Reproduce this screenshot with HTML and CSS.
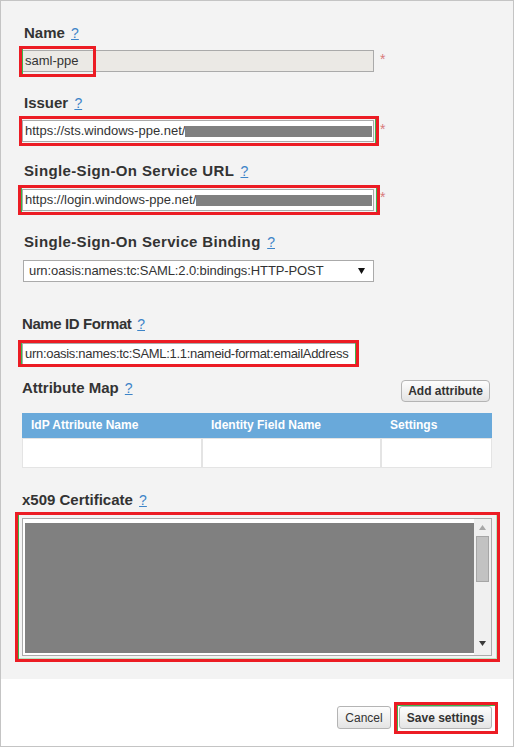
FILE: index.html
```html
<!DOCTYPE html>
<html lang="en">
<head>
<meta charset="utf-8">
<title>SAML settings</title>
<link rel="stylesheet" href="styles.css">
</head>
<body>
<div class="panel">
  <div class="form">
    <div class="field f-name">
      <div class="lbl">Name <a class="help" href="#">?</a></div>
      <div class="row">
        <div class="inp-wrap">
          <div class="inp inp-disabled"><span class="val">saml-ppe</span></div>
          <span class="hl hl-name"></span>
        </div>
        <span class="req">*</span>
      </div>
    </div>

    <div class="field f-issuer">
      <div class="lbl">Issuer <a class="help" href="#">?</a></div>
      <div class="row">
        <div class="inp-wrap">
          <div class="inp"><span class="val">https://sts.windows-ppe.net/</span><span class="redact"></span></div>
          <span class="hl hl-issuer"></span>
        </div>
        <span class="req">*</span>
      </div>
    </div>

    <div class="field f-sso">
      <div class="lbl lbl-wide lbl-10">Single-Sign-On Service URL <a class="help" href="#">?</a></div>
      <div class="row">
        <div class="inp-wrap">
          <div class="inp"><span class="val">https://login.windows-ppe.net/</span><span class="redact"></span></div>
          <span class="hl hl-sso"></span>
        </div>
        <span class="req req-low">*</span>
      </div>
    </div>

    <div class="field f-binding">
      <div class="lbl lbl-wide lbl-10">Single-Sign-On Service Binding <a class="help" href="#">?</a></div>
      <div class="select">
        <span class="val">urn:oasis:names:tc:SAML:2.0:bindings:HTTP-POST</span>
        <svg class="caret" width="7" height="6" viewBox="0 0 7 6"><polygon points="0,0 7,0 3.5,6" fill="#111"/></svg>
      </div>
    </div>

    <div class="field f-nameid">
      <div class="lbl lbl-low lbl-narrow lbl-11">Name ID Format <a class="help" href="#">?</a></div>
      <div class="inp-wrap">
        <div class="inp inp-nameid"><span class="val">urn:oasis:names:tc:SAML:1.1:nameid-format:emailAddress</span></div>
        <span class="hl hl-nameid"></span>
      </div>
    </div>

    <div class="field f-attr">
      <div class="attr-head">
        <div class="lbl lbl-low">Attribute Map <a class="help" href="#">?</a></div>
        <button class="btn btn-add" type="button">Add attribute</button>
      </div>
      <div class="tbl">
        <div class="th">IdP Attribute Name</div>
        <div class="th">Identity Field Name</div>
        <div class="th">Settings</div>
        <div class="td"></div>
        <div class="td"></div>
        <div class="td"></div>
      </div>
    </div>

    <div class="field f-cert">
      <div class="lbl lbl-low lbl-10">x509 Certificate <a class="help" href="#">?</a></div>
      <div class="inp-wrap">
        <div class="cert">
          <div class="cert-body"><div class="cert-fill"></div></div>
          <div class="sbar">
            <svg class="arr-up" width="7" height="5" viewBox="0 0 7 5"><polygon points="3.5,0 7,5 0,5" fill="#a8a8a8"/></svg>
            <div class="thumb"></div>
            <svg class="arr-down" width="7" height="5" viewBox="0 0 7 5"><polygon points="0,0 7,0 3.5,5" fill="#3a3a3a"/></svg>
          </div>
        </div>
        <span class="hl hl-cert"></span>
      </div>
    </div>
  </div>

  <div class="footer">
    <button class="btn btn-cancel" type="button">Cancel</button>
    <div class="inp-wrap">
      <button class="btn btn-save" type="button">Save settings</button>
      <span class="hl hl-save"></span>
    </div>
  </div>
</div>
</body>
</html>
```

FILE: styles.css
```css
* { box-sizing: border-box; }

html, body {
  margin: 0;
  padding: 0;
  background: #ffffff;
}

body {
  font-family: "Liberation Sans", Arial, sans-serif;
  color: #333333;
}

.panel {
  width: 514px;
  height: 747px;
  border: 1px solid #c4c4c4;
  display: flex;
  flex-direction: column;
}

.form {
  background: #f3f3f3;
  padding: 23px 21px 23px 21px;
}

.field { margin-bottom: 22px; }
.f-issuer { margin-bottom: 20px; }
.f-binding { margin-bottom: 33px; }
.f-nameid { margin-bottom: 14px; }
.f-attr { margin-bottom: 23px; }
.f-cert { margin-bottom: 0; }

.lbl {
  font-size: 15px;
  font-weight: bold;
  height: 17px;
  line-height: 17px;
  color: #333333;
  padding-left: 2px;
  margin-bottom: 9px;
  white-space: nowrap;
}
.lbl-wide { letter-spacing: 0.36px; }
.lbl-narrow { letter-spacing: -0.4px; }
.lbl-low { padding-left: 0; }
.lbl-10 { margin-bottom: 10px; }
.lbl-11 { margin-bottom: 11px; }

.help {
  font-size: 14px;
  line-height: 14px;
  font-weight: normal;
  letter-spacing: 0;
  color: #3d84c8;
  text-decoration: underline;
  margin-left: 2px;
}

.row {
  display: flex;
  align-items: flex-start;
}

.inp-wrap {
  position: relative;
  display: block;
  width: fit-content;
}

.inp {
  width: 352px;
  height: 22px;
  border: 1px solid #aaaaaa;
  background: #ffffff;
  font-size: 13px;
  line-height: 20px;
  padding: 0 0 0 2px;
  display: flex;
  align-items: center;
  white-space: nowrap;
  overflow: hidden;
  color: #333333;
}

.inp-disabled { background: #ebe9e5; }

.inp-nameid {
  width: 335px;
  letter-spacing: -0.3px;
}

.redact {
  flex: 1;
  height: 11px;
  background: #808080;
  margin-right: 1px;
}

.req {
  font-size: 14px;
  line-height: 18px;
  color: #d87a7a;
  margin-left: 6px;
}
.req-low { line-height: 17px; }

.hl {
  position: absolute;
  border: 3px solid #ec1c24;
  pointer-events: none;
}
.hl-name { left: -3px; top: -4px; width: 77px; height: 31px; box-shadow: inset 1px 0 0 #3cb44b; }
.hl-issuer { left: -3px; top: -4px; right: -5px; bottom: -4px; box-shadow: inset -1px 0 0 #3cb44b; }
.hl-sso { left: -4px; top: -4px; right: -6px; bottom: -4px; box-shadow: inset 1px 0 0 #3cb44b, inset -1px 0 0 #3cb44b; }
.hl-nameid { left: -4px; top: -3px; right: -2px; bottom: -2px; box-shadow: inset 1px 0 0 #3cb44b, inset -1px 0 0 #3cb44b; }
.hl-cert { left: -7px; top: -6px; right: -8px; bottom: -6px; box-shadow: inset 1px 0 0 #3cb44b, inset -1px -1px 0 #b5e6bf; }
.hl-save { left: -5px; top: -4px; right: -6px; bottom: -5px; box-shadow: inset 0 1px 0 #3cb44b, inset 1px 0 0 #3cb44b; }

.select {
  width: 351px;
  height: 22px;
  margin-left: 1px;
  border: 1px solid #aaaaaa;
  background: #ffffff;
  font-size: 13px;
  line-height: 20px;
  padding: 0 8px 0 5px;
  display: flex;
  align-items: center;
  justify-content: space-between;
  color: #333333;
  letter-spacing: -0.1px;
  white-space: nowrap;
}

.caret { display: block; }

.attr-head {
  width: 470px;
  height: 23px;
  display: flex;
  justify-content: space-between;
  align-items: flex-start;
  margin-bottom: 11px;
}
.attr-head .lbl { margin-bottom: 0; }

.btn {
  font-family: "Liberation Sans", Arial, sans-serif;
  font-size: 12px;
  color: #333333;
  border: 1px solid #b4b4b4;
  border-radius: 4px;
  background: linear-gradient(#fdfdfd, #e4e4e4);
  padding: 0;
  margin: 0;
  display: block;
}

.btn-add {
  width: 89px;
  height: 22px;
  margin-top: 1px;
  margin-right: 2px;
  font-weight: bold;
}

.tbl {
  width: 470px;
  display: grid;
  grid-template-columns: 180px 179px 111px;
}

.th {
  background: #69a9da;
  color: #ffffff;
  font-size: 12px;
  font-weight: bold;
  height: 25px;
  line-height: 25px;
  padding-left: 9px;
}

.td {
  background: #ffffff;
  height: 30px;
  border: 1px solid #e4e4e4;
}

.cert {
  width: 470px;
  height: 138px;
  border: 1px solid #ababab;
  display: flex;
  background: #ffffff;
}

.cert-body {
  flex: 1;
  padding: 4px 0 2px 2px;
}

.cert-fill {
  height: 100%;
  background: #808080;
}

.sbar {
  width: 17px;
  background: #f0f0f0;
  display: flex;
  flex-direction: column;
  align-items: center;
}

.arr-up { margin-top: 6px; display: block; }

.thumb {
  width: 13px;
  height: 46px;
  margin-top: 6px;
  background: #c2c2c2;
  border: 1px solid #a6a6a6;
}

.arr-down { margin-top: auto; margin-bottom: 9px; display: block; }

.footer {
  flex: 1;
  background: #ffffff;
  display: flex;
  justify-content: flex-end;
  align-items: flex-start;
  padding: 27px 21px 0 0;
  gap: 8px;
}

.btn-cancel {
  width: 54px;
  height: 23px;
  border-radius: 3px;
}

.btn-save {
  width: 93px;
  height: 23px;
  border-radius: 3px;
  font-weight: bold;
}
```
